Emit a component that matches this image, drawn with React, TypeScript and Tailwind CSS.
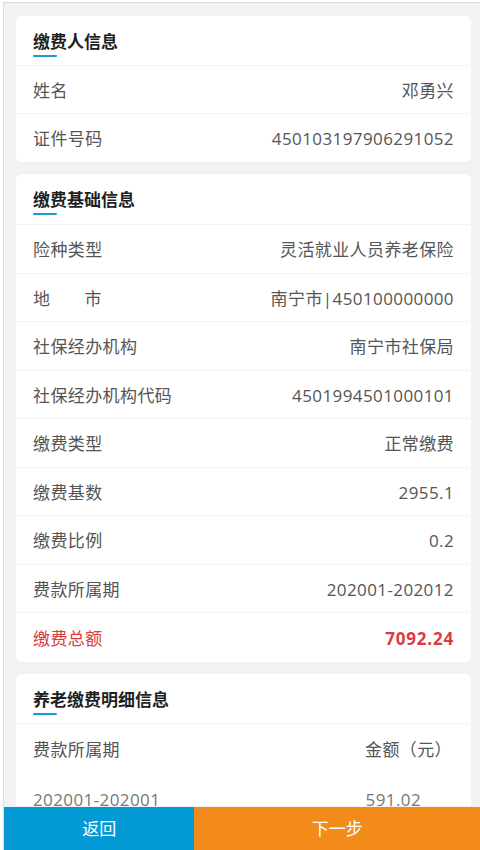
import React from "react";

type Row = { label: React.ReactNode; value: string; red?: boolean };

const payer: Row[] = [
  { label: "姓名", value: "邓勇兴" },
  { label: "证件号码", value: "450103197906291052" },
];

const basic: Row[] = [
  { label: "险种类型", value: "灵活就业人员养老保险" },
  {
    label: (
      <span>
        地<span className="inline-block w-[34px]" />市
      </span>
    ),
    value: "南宁市|450100000000",
  },
  { label: "社保经办机构", value: "南宁市社保局" },
  { label: "社保经办机构代码", value: "4501994501000101" },
  { label: "缴费类型", value: "正常缴费" },
  { label: "缴费基数", value: "2955.1" },
  { label: "缴费比例", value: "0.2" },
  { label: "费款所属期", value: "202001-202012" },
  { label: "缴费总额", value: "7092.24", red: true },
];

const CardTitle = ({ title, h }: { title: string; h: string }) => (
  <div className={`${h} px-[17px] pt-[14px] border-b border-[#f4f4f4]`}>
    <p className="text-[17px] leading-[24px] font-bold text-[#1f1f1f]">{title}</p>
    <div className="w-[24px] h-[2px] mt-[1px] bg-[#1a9ad6] rounded-full" />
  </div>
);

const InfoRow = ({ row, last, h }: { row: Row; last: boolean; h: string }) => (
  <div
    className={`flex items-center justify-between px-[17px] pt-[2px] tracking-[0.4px] ${h} ${
      last ? "" : "border-b border-[#f4f4f4]"
    }`}
  >
    <span className={row.red ? "text-[#db3b40]" : "text-[#555]"}>{row.label}</span>
    <span className={row.red ? "text-[#db3b40] font-bold tracking-[0.8px]" : "text-[#555]"}>
      {row.value}
    </span>
  </div>
);

export default function App() {
  return (
    <div
      className="h-[850px] bg-white pt-[2px] pl-[3px] flex flex-col overflow-hidden text-[17px]"
      style={{ fontFamily: '"Open Sans", "Noto Sans CJK SC", sans-serif' }}
    >
      <div className="flex-1 flex flex-col border-t border-l border-[#dadada] bg-[#f2f2f2] overflow-hidden">
        <div className="flex-1 overflow-hidden pl-3 pr-[9px] pt-[13px] flex flex-col gap-3">
          <div className="bg-white rounded-[6px] shrink-0">
            <CardTitle title="缴费人信息" h="h-[50px]" />
            {payer.map((r, i) => (
              <InfoRow key={i} row={r} last={i === payer.length - 1} h="h-[48px]" />
            ))}
          </div>

          <div className="bg-white rounded-[6px] shrink-0">
            <CardTitle title="缴费基础信息" h="h-[51px]" />
            {basic.map((r, i) => (
              <InfoRow key={i} row={r} last={i === basic.length - 1} h="h-[48.5px]" />
            ))}
          </div>

          <div className="bg-white rounded-[6px] shrink-0">
            <CardTitle title="养老缴费明细信息" h="h-[50px]" />
            <div className="flex items-center justify-between pl-[17px] pr-[19px] pt-[2px] h-[50px] tracking-[0.4px] text-[#555]">
              <span>费款所属期</span>
              <span>金额（元）</span>
            </div>
            <div className="flex items-center justify-between pl-[17px] pr-[50px] pt-[2px] h-[50px] tracking-[0.4px] text-[#777]">
              <span>202001-202001</span>
              <span>591.02</span>
            </div>
          </div>
        </div>

        <div className="h-[44px] shrink-0 flex text-white pt-[1px]">
          <button className="w-[40%] bg-[#0399d4] flex items-center justify-center">返回</button>
          <button className="flex-1 bg-[#f38b1b] flex items-center justify-center">下一步</button>
        </div>
      </div>
    </div>
  );
}
